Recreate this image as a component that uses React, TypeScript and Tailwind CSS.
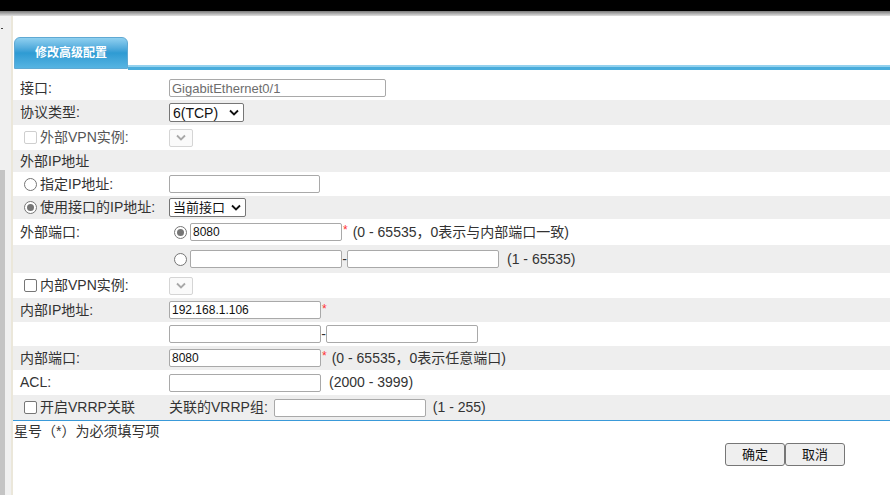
import React from "react";

const font = { fontFamily: '"Liberation Sans", "Noto Sans CJK SC", sans-serif' };

function Input({ w, value, gray }: { w: string; value?: string; gray?: boolean }) {
  return (
    <div
      className={`${w} h-[18px] border border-[#a9a9a9] rounded-[2px] bg-white flex items-center px-[2px] leading-none ${gray ? "text-[#6d6d6d] text-[13px]" : "text-[#111] text-[12px]"}`}
    >
      {value}
    </div>
  );
}

function Chevron({ color }: { color: string }) {
  return (
    <svg width="10" height="7" viewBox="0 0 10 7">
      <path d="M1 1.5 L5 5.5 L9 1.5" stroke={color} strokeWidth="1.8" fill="none" />
    </svg>
  );
}

function Select({ w, value, small }: { w: string; value: string; small?: boolean }) {
  return (
    <div className={`${w} h-[19px] border border-[#767676] rounded-[2px] bg-white flex items-center justify-between pl-[3px] pr-[4px] ${small ? "text-[13px]" : "text-[14px]"} text-[#111] leading-none whitespace-nowrap`}>
      <span>{value}</span>
      <Chevron color="#111" />
    </div>
  );
}

function DisabledSelect() {
  return (
    <div className="w-[24px] h-[18px] border border-[#d5d5d5] rounded-[2px] bg-[#fafafa] flex items-center justify-center">
      <Chevron color="#a8a8a8" />
    </div>
  );
}

function Radio({ checked }: { checked?: boolean }) {
  return (
    <div className="w-[13px] h-[13px] rounded-full border border-[#767676] bg-white flex items-center justify-center shrink-0">
      {checked && <div className="w-[7px] h-[7px] rounded-full bg-[#767676]" />}
    </div>
  );
}

function Checkbox({ disabled }: { disabled?: boolean }) {
  return (
    <div
      className={`w-[13px] h-[13px] rounded-[2px] border bg-white shrink-0 ${disabled ? "border-[#cfcfcf]" : "border-[#767676]"}`}
    />
  );
}

function Row({
  h,
  gray,
  label,
  children,
}: {
  h: string;
  gray?: boolean;
  label?: React.ReactNode;
  children?: React.ReactNode;
}) {
  return (
    <div className={`${h} flex items-center ${gray ? "bg-[#eeeeee]" : "bg-white"}`}>
      <div className="w-[156px] pl-[7px] flex items-center shrink-0 whitespace-nowrap">{label}</div>
      <div className="flex items-center whitespace-nowrap">{children}</div>
    </div>
  );
}

const Star = () => <span className="text-[#ff3333] text-[12px] self-start leading-none mt-[2px] ml-[1px]">*</span>;

export default function App() {
  return (
    <div className="w-[890px] h-[495px] overflow-hidden bg-white text-[14px] text-[#333]" style={font}>
      <div className="h-[11px] bg-black" />
      <div className="h-[5px] bg-gradient-to-b from-[#7a7a7a] to-[#e0e0e0]" />
      <div className="flex h-[479px]">
        <div className="w-[11px] bg-[#f0f0f0] flex flex-col shrink-0">
          <div className="h-[12px]" />
          <div className="ml-[1px] w-[2px] h-[1px] bg-[#444]" />
          <div className="h-[141px]" />
          <div className="w-[5px] flex-1 bg-[#c4c4c4]" />
        </div>
        <div className="w-[2px] bg-[#ebe7da] shrink-0" />
        <div className="flex-1 flex flex-col">
          <div className="h-[21px]" />
          <div className="flex items-end h-[32px]">
            <div className="ml-[1px] w-[114px] h-[32px] rounded-t-[6px] border border-[#5fa9d3] bg-gradient-to-b from-[#8fd0f0] via-[#2e9bd3] to-[#56b4e2] flex items-center justify-center text-white text-[12px] font-bold shrink-0">
              修改高级配置
            </div>
            <div className="flex-1 h-[5px] mb-[-1px] bg-[#4aaddc] border-t-2 border-[#93d1ee]" />
          </div>
          <div className="h-[7px]" />
          <Row h="h-[24px]" label="接口:">
            <Input w="w-[217px]" value="GigabitEthernet0/1" gray />
          </Row>
          <Row h="h-[25px]" gray label="协议类型:">
            <Select w="w-[75px]" value="6(TCP)" />
          </Row>
          <Row
            h="h-[25px]"
            label={
              <div className="flex items-center pl-[4px] gap-[3px] text-[#555]">
                <Checkbox disabled />
                <span>外部VPN实例:</span>
              </div>
            }
          >
            <DisabledSelect />
          </Row>
          <Row h="h-[22px]" gray label="外部IP地址" />
          <Row
            h="h-[24px]"
            label={
              <div className="flex items-center pl-[4px] gap-[3px]">
                <Radio />
                <span>指定IP地址:</span>
              </div>
            }
          >
            <Input w="w-[151px]" />
          </Row>
          <Row
            h="h-[23px]"
            gray
            label={
              <div className="flex items-center pl-[4px] gap-[3px]">
                <Radio checked />
                <span>使用接口的IP地址:</span>
              </div>
            }
          >
            <Select w="w-[77px]" value="当前接口" small />
          </Row>
          <Row h="h-[26px]" label="外部端口:">
            <div className="flex items-center pl-[5px]">
              <Radio checked />
              <div className="w-[3px]" />
              <Input w="w-[152px]" value="8080" />
              <Star />
              <span className="ml-[5px]">(0 - 65535，0表示与内部端口一致)</span>
            </div>
          </Row>
          <Row h="h-[28px]" gray>
            <div className="flex items-center pl-[5px]">
              <Radio />
              <div className="w-[3px]" />
              <Input w="w-[152px]" />
              <span className="w-[5px] text-center">-</span>
              <Input w="w-[152px]" />
              <span className="ml-[8px]">(1 - 65535)</span>
            </div>
          </Row>
          <Row
            h="h-[25px]"
            label={
              <div className="flex items-center pl-[4px] gap-[3px]">
                <Checkbox />
                <span>内部VPN实例:</span>
              </div>
            }
          >
            <DisabledSelect />
          </Row>
          <Row h="h-[24px]" gray label="内部IP地址:">
            <Input w="w-[152px]" value="192.168.1.106" />
            <Star />
          </Row>
          <Row h="h-[24px]">
            <Input w="w-[152px]" />
            <span className="w-[5px] text-center">-</span>
            <Input w="w-[152px]" />
          </Row>
          <Row h="h-[24px]" gray label="内部端口:">
            <Input w="w-[152px]" value="8080" />
            <Star />
            <span className="ml-[5px]">(0 - 65535，0表示任意端口)</span>
          </Row>
          <Row h="h-[25px]" label="ACL:">
            <Input w="w-[152px]" />
            <span className="ml-[8px]">(2000 - 3999)</span>
          </Row>
          <Row
            h="h-[25px]"
            gray
            label={
              <div className="flex items-center pl-[4px] gap-[3px]">
                <Checkbox />
                <span>开启VRRP关联</span>
              </div>
            }
          >
            <span>关联的VRRP组:</span>
            <div className="w-[6px]" />
            <Input w="w-[152px]" />
            <span className="ml-[7px]">(1 - 255)</span>
          </Row>
          <div className="h-px bg-[#3a9ad9]" />
          <div className="h-[20px] flex items-center pl-[1px]">星号（*）为必须填写项</div>
          <div className="flex justify-end pr-[45px] pt-[2px]">
            <div className="flex">
              <button className="w-[60px] h-[23px] bg-[#efefef] border border-[#767676] rounded-[3px] text-[13px] text-[#111]">确定</button>
              <button className="w-[60px] h-[23px] bg-[#efefef] border border-[#767676] rounded-[3px] text-[13px] text-[#111]">取消</button>
            </div>
          </div>
        </div>
      </div>
    </div>
  );
}
